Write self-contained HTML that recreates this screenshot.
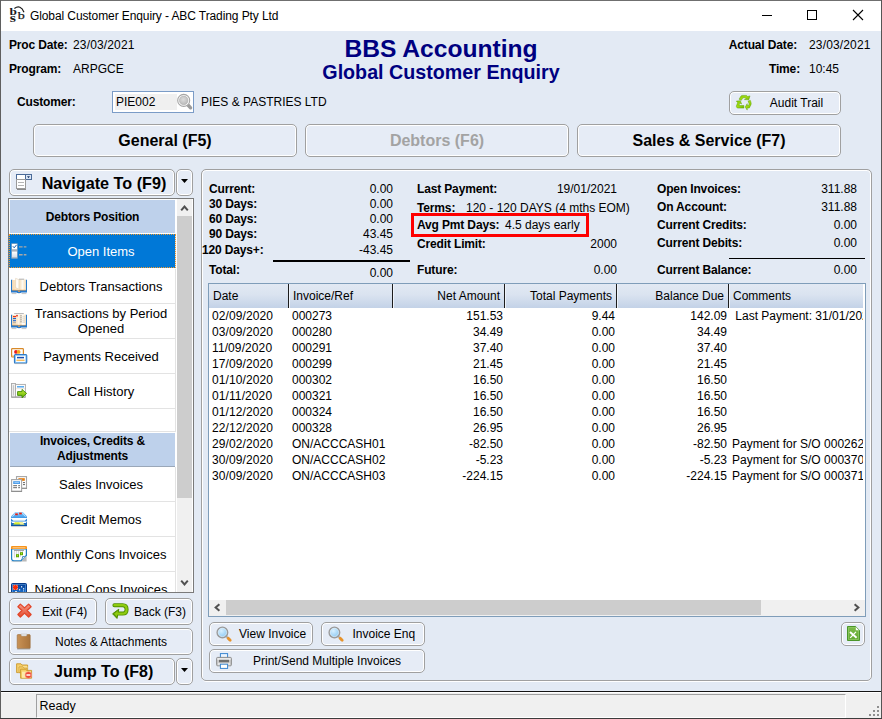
<!DOCTYPE html>
<html><head><meta charset="utf-8"><title>Global Customer Enquiry - ABC Trading Pty Ltd</title>
<style>
html,body{margin:0;padding:0;}
body{width:882px;height:719px;overflow:hidden;position:relative;background:#e3eaf4;font-family:"Liberation Sans",sans-serif;font-size:12px;color:#000;}
.t{position:absolute;white-space:nowrap;}
.a{position:absolute;}
.btn{position:absolute;border:1px solid #a0a0a0;border-radius:5px;box-shadow:inset 0 0 0 1px #fff;background:#e6ecf6;box-sizing:content-box;}
.btn .lbl{position:absolute;left:0;right:0;text-align:center;white-space:nowrap;}
svg{position:absolute;overflow:visible;}
.row{position:absolute;left:0;width:166px;height:34px;border-bottom:1px solid #e3e3e3;border-right:1px solid #e3e3e3;background:#fff;}
.row .lbl{position:absolute;left:18px;right:0;text-align:center;font-size:13px;line-height:21px;}
.hdr{position:absolute;left:1px;width:165px;background:#bed1eb;font-weight:bold;font-size:12px;letter-spacing:-0.15px;text-align:center;}
.gh{position:absolute;top:0;height:24px;line-height:24px;font-size:12px;white-space:nowrap;}
.gr{position:absolute;font-size:12px;line-height:16px;white-space:nowrap;}
</style></head><body>

<div class="a" style="left:0;top:0;width:882px;height:31px;background:#fff;"></div>
<div class="a" style="left:0;top:0;width:882px;height:1px;background:#6f6f6f;"></div>
<div class="a" style="left:0;top:0;width:1px;height:719px;background:#5f5f5f;"></div>
<div class="a" style="left:881px;top:0;width:1px;height:719px;background:#555;"></div>
<div class="a" style="left:0;top:718px;width:882px;height:1px;background:#3c3c3c;"></div>
<svg style="left:0px;top:0px" width="30" height="30" viewBox="0 0 30 30">
<text x="9.6" y="14.7" font-family="Liberation Serif,serif" font-size="10.5" font-weight="bold" fill="#1a1a1a" textLength="7.4" lengthAdjust="spacingAndGlyphs">b</text>
<text x="17.8" y="18.7" font-family="Liberation Serif,serif" font-size="11" fill="#1a1a1a" stroke="#1a1a1a" stroke-width="0.25" textLength="7" lengthAdjust="spacingAndGlyphs">b</text>
<text x="9.8" y="21.7" font-family="Liberation Serif,serif" font-size="11.5" font-weight="bold" fill="#1a1a1a" textLength="6.2" lengthAdjust="spacingAndGlyphs">s</text>
<path d="M14.4 8.4 Q20.6 4.2 24 12.2" fill="none" stroke="#1a1a1a" stroke-width="1.2"/>
</svg>
<div class="t" style="top:8px;line-height:16px;font-size:12px;color:#000;left:30px;letter-spacing:-0.1px;">Global Customer Enquiry - ABC Trading Pty Ltd</div>
<svg style="left:755px;top:5px" width="120" height="22" viewBox="0 0 120 22">
<path d="M7 10.5 H17" stroke="#000" stroke-width="1" fill="none"/>
<rect x="52.5" y="5.5" width="9" height="9" stroke="#000" stroke-width="1" fill="none"/>
<path d="M98 5 L108 15 M108 5 L98 15" stroke="#000" stroke-width="1.1" fill="none"/>
</svg>
<div class="t" style="top:37px;line-height:16px;font-size:12px;color:#000;font-weight:bold;letter-spacing:-0.15px;left:9px;">Proc Date:</div>
<div class="t" style="top:37px;line-height:16px;font-size:12px;color:#000;left:73px;letter-spacing:0.15px;">23/03/2021</div>
<div class="t" style="top:61px;line-height:16px;font-size:12px;color:#000;font-weight:bold;letter-spacing:-0.15px;left:9px;">Program:</div>
<div class="t" style="top:61px;line-height:16px;font-size:12px;color:#000;left:73px;">ARPGCE</div>
<div class="t" style="top:33px;line-height:31px;font-size:24.6px;color:#000080;font-weight:bold;left:241px;width:400px;text-align:center;">BBS Accounting</div>
<div class="t" style="top:60px;line-height:25px;font-size:19.7px;color:#000080;font-weight:bold;left:241px;width:400px;text-align:center;">Global Customer Enquiry</div>
<div class="t" style="top:37px;line-height:16px;font-size:12px;color:#000;font-weight:bold;letter-spacing:-0.15px;right:85px;">Actual Date:</div>
<div class="t" style="top:37px;line-height:16px;font-size:12px;color:#000;left:809px;letter-spacing:0.15px;">23/03/2021</div>
<div class="t" style="top:61px;line-height:16px;font-size:12px;color:#000;font-weight:bold;letter-spacing:-0.15px;right:82px;">Time:</div>
<div class="t" style="top:61px;line-height:16px;font-size:12px;color:#000;left:809px;">10:45</div>
<div class="t" style="top:94px;line-height:16px;font-size:12px;color:#000;font-weight:bold;letter-spacing:-0.15px;left:17px;">Customer:</div>
<div class="a" style="left:112px;top:91px;width:80px;height:20px;border:1px solid #7b9cc7;background:#fff;"></div>
<div class="a" style="left:115px;top:94px;width:62px;height:16px;background:#f0f0f0;"></div>
<div class="t" style="top:94px;line-height:16px;font-size:12px;color:#000;left:116px;">PIE002</div>
<svg style="left:176px;top:92px" width="18" height="20" viewBox="0 0 18 20">
<defs><radialGradient id="gS" cx="0.45" cy="0.4" r="0.7"><stop offset="0" stop-color="#dcdcdc"/><stop offset="1" stop-color="#b4b4b4"/></radialGradient></defs>
<path d="M12 13 L14.6 15.8" stroke="#9c9c9c" stroke-width="3.4" stroke-linecap="round"/>
<circle cx="7.7" cy="8.4" r="6" fill="#fdfdfd" stroke="#a6a6a6" stroke-width="1.1"/>
<circle cx="7.7" cy="8.4" r="4.3" fill="url(#gS)" stroke="#b0b0b0" stroke-width="0.6"/>
</svg>
<div class="t" style="top:94px;line-height:16px;font-size:12px;color:#000;left:201px;">PIES &amp; PASTRIES LTD</div>
<div class="btn" style="left:729px;top:91px;width:110px;height:22px;"><div class="lbl" style="left:23px;top:3px;line-height:16px;font-size:12px;">Audit Trail</div></div>
<svg style="left:736px;top:95px" width="16" height="16" viewBox="0 0 16 16">
<defs><linearGradient id="gR" x1="0" x2="1" y1="0" y2="1"><stop offset="0" stop-color="#86cc08"/><stop offset="0.5" stop-color="#a4dc10"/><stop offset="1" stop-color="#6ab400"/></linearGradient></defs>
<g fill="url(#gR)" stroke="#559c00" stroke-width="0.45" stroke-linejoin="round">
<path d="M3 4.2 L5 1 Q5.4 0.4 6.2 0.4 H10.6 L11.4 1.6 L14 0.9 L12.8 4.8 L8.4 4.6 L10 3.7 L9.4 2.8 H6.9 L5.3 5.3 Z"/>
<path d="M12.1 6 L14.4 5.4 L15.1 7.8 Q15.4 9 14.9 9.9 L13.3 13 H11.2 V15.1 L9.2 12 L11.2 8.7 V10.6 H12.3 L13.2 9 Z"/>
<path d="M0.3 6.1 L4.4 5.7 L5.6 9 L3.9 8.1 L2.9 10.5 H7.9 V13.1 H2 Q0.7 13.1 0.4 11.7 Q0.3 10.8 0.8 9.8 L1.7 7.7 Z"/>
</g>
</svg>
<div class="btn" style="left:33px;top:124px;width:262px;height:31px;"><div class="lbl" style="top:6px;line-height:20px;font-size:16px;font-weight:bold;color:#000;">General (F5)</div></div>
<div class="btn" style="left:305px;top:124px;width:262px;height:31px;"><div class="lbl" style="top:6px;line-height:20px;font-size:16px;font-weight:bold;color:#a3a3a3;">Debtors (F6)</div></div>
<div class="btn" style="left:577px;top:124px;width:262px;height:31px;"><div class="lbl" style="top:6px;line-height:20px;font-size:16px;font-weight:bold;color:#000;">Sales &amp; Service (F7)</div></div>
<div class="btn" style="left:9px;top:169px;width:164px;height:25px;"><div class="lbl" style="left:24px;top:3px;line-height:20px;font-size:16.2px;font-weight:bold;">Navigate To (F9)</div></div>
<svg style="left:16px;top:174px" width="16" height="16" viewBox="0 0 16 16">
<rect x="0.5" y="0.5" width="15" height="5" fill="#fff" stroke="#4a6a98"/>
<rect x="9.5" y="0.5" width="6" height="5" fill="#dbe6f5" stroke="#4a6a98"/>
<path d="M11 2.2 h3 l-1.5 2 z" fill="#1f3a68"/>
<rect x="0.5" y="5.5" width="9" height="9" fill="#fff" stroke="#9a9a9a"/>
<path d="M2 8.5 h6 M2 11.5 h6" stroke="#b5b5b5" stroke-width="1"/>
<path d="M1 15.5 h9" stroke="#8a8a8a" stroke-width="1"/>
</svg>
<div class="btn" style="left:176px;top:169px;width:15px;height:25px;"><svg style="left:4px;top:9px" width="8" height="5" viewBox="0 0 8 5"><path d="M0 0 h7 l-3.5 4 z" fill="#000"/></svg></div>
<div class="a" style="left:8px;top:198px;width:184px;height:393px;border:1px solid #7a7a7a;background:#fff;"></div>
<div class="a" id="list" style="left:9px;top:199px;width:167px;height:393px;overflow:hidden;">
<div class="hdr" style="top:1px;height:33px;line-height:34px;">Debtors Position</div>
<div class="row" style="top:35px;height:34px;border-bottom:none;background:#0078d7;color:#fff;outline:1px dotted #f39a2e;outline-offset:-1px;"><svg style="left:2px;top:9px" width="16" height="16" viewBox="0 0 16 16">
<defs><linearGradient id="gC" x1="0" x2="0" y1="0" y2="1"><stop offset="0" stop-color="#ffffff"/><stop offset="1" stop-color="#d5dde8"/></linearGradient></defs>
<rect x="0.4" y="0.4" width="6.2" height="15.2" fill="#a9b1bd"/>
<rect x="1" y="1" width="5" height="5.2" fill="#fff"/>
<rect x="1" y="8.6" width="5" height="5.6" fill="url(#gC)"/>
<path d="M1.8 3.2 L3.2 4.8 L5.6 1.8" fill="none" stroke="#1f5fae" stroke-width="1"/>
<path d="M8 3.9 H11.6 M12.8 3.9 H15.4 M8 11.7 H11.6 M12.8 11.7 H15.4" stroke="#a8a8a8" stroke-width="1.4"/>
</svg><div class="lbl" style="top:7px;">Open Items</div></div>
<div class="row" style="top:70px;height:34px;"><svg style="left:2px;top:9px" width="16" height="16" viewBox="0 0 16 16"><defs>
<linearGradient id="pgL" x1="0" x2="1" y1="0" y2="0"><stop offset="0" stop-color="#f7d9ae"/><stop offset="1" stop-color="#fdf0de"/></linearGradient>
<linearGradient id="pgR" x1="0" x2="1" y1="0" y2="0"><stop offset="0" stop-color="#f3dcb8"/><stop offset="0.5" stop-color="#fffaf0"/><stop offset="1" stop-color="#fbe0b8"/></linearGradient>
</defs>
<path d="M0 1.8 H1.3 V12 H14.7 V1.8 H16 V14.5 H10.4 Q9.8 15.3 8 15.3 Q6.2 15.3 5.6 14.5 H0 Z" fill="#2679cc"/>
<rect x="1.2" y="2" width="6.6" height="10" fill="url(#pgL)"/>
<rect x="8.2" y="1.6" width="6.6" height="10.4" fill="url(#pgR)"/>
<path d="M1.2 12.2 H14.8" stroke="#f3a54a" stroke-width="0.7"/>
<rect x="7.2" y="12.7" width="1.6" height="1.2" fill="#f3a54a"/>
<path d="M0.6 15.6 H5.4 M10.6 15.6 H15.4" stroke="#b4b4b4" stroke-width="0.8"/>

<path d="M8 1.2 H13.2" stroke="#9a9a9a" stroke-width="0.8"/>
<path d="M4.6 0.4 L7.9 1.6 V11.2 L4.6 9.6 Z" fill="#fffdf8" stroke="#dcc6a4" stroke-width="0.5"/>
</svg><div class="lbl" style="top:7px;">Debtors Transactions</div></div>
<div class="row" style="top:105px;height:34px;"><svg style="left:2px;top:9px" width="16" height="16" viewBox="0 0 16 16"><defs>
<linearGradient id="pgL2" x1="0" x2="1" y1="0" y2="0"><stop offset="0" stop-color="#f7d9ae"/><stop offset="1" stop-color="#fdf0de"/></linearGradient>
<linearGradient id="pgR2" x1="0" x2="1" y1="0" y2="0"><stop offset="0" stop-color="#f3dcb8"/><stop offset="0.5" stop-color="#fffaf0"/><stop offset="1" stop-color="#fbe0b8"/></linearGradient>
</defs>
<path d="M0 1.8 H1.3 V12 H14.7 V1.8 H16 V14.5 H10.4 Q9.8 15.3 8 15.3 Q6.2 15.3 5.6 14.5 H0 Z" fill="#2679cc"/>
<rect x="1.2" y="2" width="6.6" height="10" fill="url(#pgL2)"/>
<rect x="8.2" y="1.6" width="6.6" height="10.4" fill="url(#pgR2)"/>
<path d="M1.2 12.2 H14.8" stroke="#f3a54a" stroke-width="0.7"/>
<rect x="7.2" y="12.7" width="1.6" height="1.2" fill="#f3a54a"/>
<path d="M0.6 15.6 H5.4 M10.6 15.6 H15.4" stroke="#b4b4b4" stroke-width="0.8"/>

<path d="M3.2 0.6 H12.8" stroke="#a0a0a0" stroke-width="0.8"/>
<rect x="7.6" y="1.4" width="0.8" height="10.6" fill="#fff7e8"/>
<path d="M2 3.6 H5" stroke="#e8301a" stroke-width="1.2"/><circle cx="6" cy="2.7" r="0.9" fill="#e8301a"/>
<path d="M2 5.6 H5" stroke="#1a62d0" stroke-width="1.1"/>
<path d="M2 7.7 H5" stroke="#1a62d0" stroke-width="1.1"/>
<path d="M2 9.7 H5" stroke="#9a9a9a" stroke-width="0.8"/>
<path d="M9 2.8 H11 M9 4.8 H11 M9 6.8 H11 M9 8.8 H11" stroke="#9a9a9a" stroke-width="0.8"/>
<path d="M11.4 3.8 H14 M11.4 5.8 H14 M11.4 7.8 H14 M11.4 9.8 H14" stroke="#cfcfcf" stroke-width="0.8"/>
<rect x="11" y="10.2" width="3" height="1.4" fill="#fff"/>
</svg><div class="lbl" style="top:2px;line-height:15px;">Transactions by Period<br>Opened</div></div>
<div class="row" style="top:140px;height:34px;"><svg style="left:2px;top:9px" width="16" height="16" viewBox="0 0 16 16">
<rect x="0.6" y="0.6" width="11.8" height="8.4" rx="0.8" fill="#fff" stroke="#d88a2a" stroke-width="1.2"/>
<path d="M1 8.2 H12" stroke="#f5b24a" stroke-width="1.2"/>
<circle cx="5" cy="3.9" r="1.9" fill="#e81a1a"/><circle cx="7.6" cy="3.9" r="1.9" fill="#f7a81a"/>
<rect x="3.6" y="6.6" width="12" height="8.4" rx="0.8" fill="#fff" stroke="#2f78c4" stroke-width="1.4"/>
<rect x="4.3" y="7.3" width="10.6" height="7" fill="none" stroke="#7cc0f5" stroke-width="0.7"/>
<path d="M6 9.6 H13" stroke="#1a4fb0" stroke-width="1.5"/>
<path d="M5.4 12.2 H13.6" stroke="#f5a21a" stroke-width="1"/>
<path d="M4 15.6 H15.6" stroke="#b9b9b9" stroke-width="0.7"/>
</svg><div class="lbl" style="top:7px;">Payments Received</div></div>
<div class="row" style="top:175px;height:34px;"><svg style="left:2px;top:9px" width="16" height="16" viewBox="0 0 16 16">
<defs><linearGradient id="gA" x1="0" x2="0" y1="0" y2="1"><stop offset="0" stop-color="#c8f03a"/><stop offset="1" stop-color="#5fae00"/></linearGradient></defs>
<rect x="4.4" y="1.4" width="10" height="12.4" fill="#fdfdfd" stroke="#a8a8a8" stroke-width="0.9"/>
<rect x="0.5" y="0.5" width="4" height="13.4" fill="#f1f1f1" stroke="#a8a8a8" stroke-width="0.9"/>
<path d="M2.4 2.2 V12.5" stroke="#b5b5b5" stroke-width="0.8"/>
<path d="M6 3.8 H13" stroke="#4aa3ee" stroke-width="1.4"/>
<path d="M5.2 5.6 H14" stroke="#e6d6c6" stroke-width="0.6"/>
<path d="M0.3 14.4 H14.6" stroke="#9c9c9c" stroke-width="0.9"/>
<path d="M6.6 8.6 H11 V6.4 L15.6 10.4 L11 14.8 V12.4 H6.6 Z" fill="url(#gA)" stroke="#3f8a00" stroke-width="0.9" stroke-linejoin="round"/>
</svg><div class="lbl" style="top:7px;">Call History</div></div>
<div class="row" style="top:210px;height:22px;"><div class="lbl" style="top:7px;"></div></div>
<div class="hdr" style="top:234px;height:33px;line-height:15px;border-bottom:1px solid #9aa7b8;"><div style="padding-top:1px">Invoices, Credits &amp;<br>Adjustments</div></div>
<div class="row" style="top:268px;height:34px;"><svg style="left:2px;top:9px" width="16" height="16" viewBox="0 0 16 16">
<rect x="5.5" y="0.6" width="10" height="11.6" fill="#fff" stroke="#a6a6a6" stroke-width="1.1"/>
<path d="M5.2 12.4 H16" stroke="#8f8f8f" stroke-width="1"/>
<rect x="7.4" y="2.2" width="6.4" height="2.6" fill="#e87d0c"/>
<path d="M12 6.6 H14 M12 8.6 H14" stroke="#555" stroke-width="0.9"/>
<rect x="0.6" y="3.6" width="10" height="11.6" fill="#fff" stroke="#a6a6a6" stroke-width="1.1"/>
<path d="M0.2 15.5 H11" stroke="#8f8f8f" stroke-width="1"/>
<rect x="2.2" y="5.2" width="6.8" height="2.8" fill="#4a9be8"/>
<path d="M3.4 6.6 H8" stroke="#bfe0ff" stroke-width="0.7"/>
<path d="M2.2 9.7 H6 M7.2 9.7 H9 M2.2 11.7 H6 M7.2 11.7 H9" stroke="#555" stroke-width="0.9"/>
</svg><div class="lbl" style="top:7px;">Sales Invoices</div></div>
<div class="row" style="top:303px;height:34px;"><svg style="left:2px;top:9px" width="16" height="16" viewBox="0 0 16 16">
<defs><linearGradient id="gT" x1="0" x2="0" y1="0" y2="1"><stop offset="0" stop-color="#8fd0ff"/><stop offset="1" stop-color="#3c97e6"/></linearGradient></defs>
<path d="M4.2 1 H11.8 L16 5.6 V7 H0 V5.6 Z" fill="url(#gT)"/>
<path d="M1.4 5.8 L4.6 2 H11.4 L14.6 5.8" fill="none" stroke="#d9efff" stroke-width="0.7"/>
<rect x="4.2" y="2.4" width="2.6" height="1.8" fill="#ee1c0c"/><rect x="8.2" y="1.6" width="2.6" height="1.8" fill="#ee1c0c"/>
<path d="M0 7.4 L2 9.4 H14 L16 7.4 V10.4 H0 Z" fill="#2f86d9"/>
<path d="M2.2 9.2 H13.8" stroke="#e9f5ff" stroke-width="0.8"/>
<path d="M0 10.8 L1.4 12 H14.6 L16 10.8 V15 H0 Z" fill="#1d6fc4"/>
<path d="M4 11.2 H11.2 L13.6 13.6 H2 Z" fill="#d8e82a"/><path d="M8 11.2 H11.2 L13.6 13.6 H9.4 Z" fill="#f6f0a0"/>
<path d="M0 14.6 H16" stroke="#0f56a6" stroke-width="1.2"/>
<path d="M0.4 15.6 H15.6" stroke="#c4c4c4" stroke-width="0.6"/>
</svg><div class="lbl" style="top:7px;">Credit Memos</div></div>
<div class="row" style="top:338px;height:34px;"><svg style="left:2px;top:9px" width="16" height="16" viewBox="0 0 16 16">
<path d="M0.6 3 V12.6 Q0.6 14.8 2.8 14.8 H10 L15.4 9.6 V3 Z" fill="#fff" stroke="#1f7fc4" stroke-width="1.2"/>
<path d="M10 15.4 L15.6 10 V15.4 Z" fill="#b9b9b9"/>
<path d="M10.4 14.6 Q11.6 12 11.6 10.6 Q13.4 10.8 15 9.8" fill="#e9f1f8" stroke="#2d7fbe" stroke-width="0.9"/>
<path d="M0 0.9 Q0 0 1 0 H15 Q16 0 16 0.9 V3 H0 Z" fill="#f7941d"/>
<path d="M1.6 1.8 H14.4" stroke="#ffe2b6" stroke-width="0.8"/>
<path d="M3 4.4 H13 M3.4 4.4 V11.6 M5.4 4.4 V11.6 M7.4 4.4 V11.6 M9.4 4.4 V11 M11.4 4.4 V9" stroke="#b7b7c4" stroke-width="0.6"/>
<path d="M3 4.4 H13" stroke="#9a9a9a" stroke-width="0.9"/>
<rect x="5" y="8.2" width="3" height="3" fill="#5fa800"/><rect x="9" y="6.2" width="3" height="3" fill="#5fa800"/>
<rect x="6" y="9.2" width="1" height="1" fill="#c6ee3a"/><rect x="10" y="7.2" width="1" height="1" fill="#c6ee3a"/>
<path d="M0.4 15.6 H10" stroke="#bdbdbd" stroke-width="0.6"/>
</svg><div class="lbl" style="top:7px;">Monthly Cons Invoices</div></div>
<div class="row" style="top:373px;height:34px;"><svg style="left:2px;top:9px" width="16" height="16" viewBox="0 0 16 16">
<defs><linearGradient id="gF" x1="0" x2="0" y1="0" y2="1"><stop offset="0" stop-color="#06398c"/><stop offset="1" stop-color="#1f7fe0"/></linearGradient></defs>
<rect x="0.5" y="2.5" width="15" height="12" rx="1" fill="url(#gF)" stroke="#083a8a" stroke-width="1"/>
<rect x="1.4" y="3.4" width="13.2" height="10.2" fill="none" stroke="#6fb3f2" stroke-width="0.5"/>
<rect x="1.8" y="3.8" width="5.2" height="5.2" fill="#9fd4ff"/>
<path d="M4.4 3.8 V9 M1.8 6.4 H7 M2.2 4.2 L6.6 8.6 M6.6 4.2 L2.2 8.6" stroke="#ff2a00" stroke-width="1.3"/>
<rect x="3.2" y="5.2" width="2.4" height="2.4" fill="#ff2a00"/>
<rect x="10" y="5.2" width="1.2" height="1.2" fill="#fff"/><rect x="12" y="7.2" width="1.2" height="1.2" fill="#fff"/><rect x="8" y="8.2" width="1.2" height="1.2" fill="#fff"/><rect x="12" y="9.4" width="1" height="1" fill="#cfe6ff"/>
<rect x="4" y="10.2" width="2" height="1.4" fill="#fff"/>
</svg><div class="lbl" style="top:7px;">National Cons Invoices</div></div>
</div>
<div class="a" style="left:177px;top:199px;width:15px;height:393px;background:#f0f0f0;"></div>
<div class="a" style="left:177px;top:216px;width:15px;height:282px;background:#cdcdcd;"></div>
<svg style="left:180px;top:204px" width="9" height="8" viewBox="0 0 9 8"><path d="M1.2 6.4 L4.5 2.6 L7.8 6.4" fill="none" stroke="#505050" stroke-width="2"/></svg>
<svg style="left:180px;top:579px" width="9" height="8" viewBox="0 0 9 8"><path d="M1.2 1.6 L4.5 5.4 L7.8 1.6" fill="none" stroke="#505050" stroke-width="2"/></svg>
<div class="btn" style="left:9px;top:598px;width:86px;height:25px;"></div>
<svg style="left:16.5px;top:603px" width="15" height="15" viewBox="0 0 16 16">
<defs><linearGradient id="gX" x1="0" x2="0" y1="0" y2="1"><stop offset="0" stop-color="#f59a88"/><stop offset="1" stop-color="#e44a2e"/></linearGradient></defs>
<path d="M3.6 1.2 L8 5.2 L12.4 1.2 L15 4 L10.8 8 L15 12.2 L12.4 15 L8 10.8 L3.6 15 L1 12.2 L5.2 8 L1 4 Z" fill="url(#gX)" stroke="#e2462a" stroke-width="1.4" stroke-linejoin="round"/>
</svg>
<div class="t" style="top:604px;line-height:16px;font-size:12px;color:#000;left:42px;">Exit (F4)</div>
<div class="btn" style="left:105px;top:598px;width:86px;height:25px;"></div>
<svg style="left:112px;top:603px" width="16" height="16" viewBox="0 0 16 16">
<path d="M2.4 2.2 H10.6 Q14.6 2.2 14.6 6.4 Q14.6 10.6 10.6 10.6 H5.6" fill="none" stroke="#4f8f00" stroke-width="4" stroke-linecap="round"/>
<path d="M6.8 6.2 L0.6 10.8 L5 15.4 Z" fill="#4f8f00" stroke="#4f8f00" stroke-width="1" stroke-linejoin="round"/>
<path d="M2.4 2.2 H10.6 Q14.6 2.2 14.6 6.4 Q14.6 10.6 10.6 10.6 H5.6" fill="none" stroke="#8ecb10" stroke-width="2.2" stroke-linecap="round"/>
<path d="M6 7.8 L2 10.8 L4.8 13.8 Z" fill="#8ecb10"/>
</svg>
<div class="t" style="top:604px;line-height:16px;font-size:12px;color:#000;left:134px;">Back (F3)</div>
<div class="btn" style="left:9px;top:628px;width:182px;height:25px;"></div>
<svg style="left:16px;top:632.6px" width="16" height="16" viewBox="0 0 16 16">
<defs><linearGradient id="gN" x1="0" x2="1" y1="0" y2="0"><stop offset="0" stop-color="#c99356"/><stop offset="0.5" stop-color="#b98248"/><stop offset="1" stop-color="#a9743c"/></linearGradient></defs>
<rect x="1.2" y="1.6" width="13" height="14" rx="0.8" fill="url(#gN)" stroke="#9a6a36" stroke-width="0.6"/>
<path d="M5 1 H11 L10.4 3 H5.6 Z" fill="#e9e9e9" stroke="#b9b9b9" stroke-width="0.5"/>
<path d="M1 16 H14.4" stroke="#8a8a8a" stroke-width="0.6"/>
</svg>
<div class="t" style="top:634px;line-height:16px;font-size:12px;color:#000;left:55px;">Notes &amp; Attachments</div>
<div class="btn" style="left:9px;top:658px;width:164px;height:25px;"></div>
<svg style="left:16px;top:663px" width="16" height="16" viewBox="0 0 16 16">
<path d="M0.6 0.8 H5 L6 2 H11.6 V9.6 H0.6 Z" fill="#f6cf68" stroke="#c9972c" stroke-width="0.9"/>
<path d="M2 3.4 H11.4 V9.4 H2 Z" fill="#fde9a8"/>
<path d="M2.8 3.8 H7 L8 5 H11 V9.6 H2.8 Z" fill="#f6cf68" stroke="#c9972c" stroke-width="0.7"/>
<path d="M4.6 6.2 H9.6 L10.6 7.4 H15.6 V15.2 H4.6 Z" fill="#f6cf68" stroke="#c9972c" stroke-width="0.9"/>
<path d="M6 8.6 H15 V14.8 H6 Z" fill="#fde9a8"/>
<circle cx="12.4" cy="12" r="3.3" fill="#ee4a36" stroke="#f7a08e" stroke-width="0.6"/>
<path d="M10.4 12 H14.4" stroke="#fff" stroke-width="1.5"/>
</svg>
<div class="t" style="top:662px;line-height:20px;font-size:16px;color:#000;font-weight:bold;left:54px;">Jump To (F8)</div>
<div class="btn" style="left:176px;top:658px;width:15px;height:25px;"><svg style="left:4px;top:9px" width="8" height="5" viewBox="0 0 8 5"><path d="M0 0 h7 l-3.5 4 z" fill="#000"/></svg></div>
<div class="a" style="left:202px;top:170px;width:667px;height:510px;border:1px solid #fff;border-radius:4px;"></div>
<div class="a" style="left:201px;top:169px;width:669px;height:510px;border:1px solid #a0a0a0;border-radius:5px;"></div>
<div class="t" style="top:181px;line-height:16px;font-size:12px;color:#000;font-weight:bold;letter-spacing:-0.15px;left:209px;">Current:</div>
<div class="t" style="top:181px;line-height:16px;font-size:12px;color:#000;right:489px;">0.00</div>
<div class="t" style="top:196px;line-height:16px;font-size:12px;color:#000;font-weight:bold;letter-spacing:-0.15px;left:209px;">30 Days:</div>
<div class="t" style="top:196px;line-height:16px;font-size:12px;color:#000;right:489px;">0.00</div>
<div class="t" style="top:211px;line-height:16px;font-size:12px;color:#000;font-weight:bold;letter-spacing:-0.15px;left:209px;">60 Days:</div>
<div class="t" style="top:211px;line-height:16px;font-size:12px;color:#000;right:489px;">0.00</div>
<div class="t" style="top:226px;line-height:16px;font-size:12px;color:#000;font-weight:bold;letter-spacing:-0.15px;left:209px;">90 Days:</div>
<div class="t" style="top:226px;line-height:16px;font-size:12px;color:#000;right:489px;">43.45</div>
<div class="t" style="top:262px;line-height:16px;font-size:12px;color:#000;font-weight:bold;letter-spacing:-0.15px;left:209px;">Total:</div>
<div class="t" style="top:265px;line-height:16px;font-size:12px;color:#000;right:489px;">0.00</div>
<div class="t" style="top:242px;line-height:16px;font-size:12px;color:#000;font-weight:bold;letter-spacing:-0.15px;left:202px;">120 Days+:</div>
<div class="t" style="top:242px;line-height:16px;font-size:12px;color:#000;right:489px;">-43.45</div>
<div class="a" style="left:273px;top:260px;width:137px;height:2px;background:#000;"></div>
<div class="t" style="top:181px;line-height:16px;font-size:12px;color:#000;font-weight:bold;letter-spacing:-0.15px;left:417px;">Last Payment:</div>
<div class="t" style="top:181px;line-height:16px;font-size:12px;color:#000;right:265px;">19/01/2021</div>
<div class="t" style="top:236px;line-height:16px;font-size:12px;color:#000;font-weight:bold;letter-spacing:-0.15px;left:417px;">Credit Limit:</div>
<div class="t" style="top:236px;line-height:16px;font-size:12px;color:#000;right:265px;">2000</div>
<div class="t" style="top:262px;line-height:16px;font-size:12px;color:#000;font-weight:bold;letter-spacing:-0.15px;left:417px;">Future:</div>
<div class="t" style="top:262px;line-height:16px;font-size:12px;color:#000;right:265px;">0.00</div>
<div class="t" style="top:200px;line-height:16px;font-size:12px;color:#000;font-weight:bold;letter-spacing:-0.15px;left:417px;">Terms:</div>
<div class="t" style="top:200px;line-height:16px;font-size:12px;color:#000;left:466px;">120 - 120 DAYS (4 mths EOM)</div>
<div class="a" style="left:411px;top:213px;width:172px;height:18px;border:3px solid #fe0000;background:#e3eaf4;"></div>
<div class="t" style="top:217px;line-height:16px;font-size:12px;color:#000;font-weight:bold;letter-spacing:-0.15px;left:417px;">Avg Pmt Days:</div>
<div class="t" style="top:217px;line-height:16px;font-size:12px;color:#000;left:505px;">4.5 days early</div>
<div class="t" style="top:181px;line-height:16px;font-size:12px;color:#000;font-weight:bold;letter-spacing:-0.15px;left:657px;">Open Invoices:</div>
<div class="t" style="top:181px;line-height:16px;font-size:12px;color:#000;right:25px;">311.88</div>
<div class="t" style="top:199px;line-height:16px;font-size:12px;color:#000;font-weight:bold;letter-spacing:-0.15px;left:657px;">On Account:</div>
<div class="t" style="top:199px;line-height:16px;font-size:12px;color:#000;right:25px;">311.88</div>
<div class="t" style="top:217px;line-height:16px;font-size:12px;color:#000;font-weight:bold;letter-spacing:-0.15px;left:657px;">Current Credits:</div>
<div class="t" style="top:217px;line-height:16px;font-size:12px;color:#000;right:25px;">0.00</div>
<div class="t" style="top:235px;line-height:16px;font-size:12px;color:#000;font-weight:bold;letter-spacing:-0.15px;left:657px;">Current Debits:</div>
<div class="t" style="top:235px;line-height:16px;font-size:12px;color:#000;right:25px;">0.00</div>
<div class="t" style="top:262px;line-height:16px;font-size:12px;color:#000;font-weight:bold;letter-spacing:-0.15px;left:657px;">Current Balance:</div>
<div class="t" style="top:262px;line-height:16px;font-size:12px;color:#000;right:25px;">0.00</div>
<div class="a" style="left:729px;top:258px;width:136px;height:1px;background:#000;"></div>
<div class="a" style="left:208px;top:283px;width:656px;height:332px;border:1px solid #7f9db9;background:#fff;"></div>
<div class="a" style="left:209px;top:284px;width:654px;height:24px;background:linear-gradient(#e2e9f3,#dae3f0 45%,#c3d2e7);overflow:hidden;">
<div class="gh" style="left:4px;">Date</div>
<div class="a" style="left:79px;top:0;width:1px;height:24px;background:#1c1c1c;"></div><div class="a" style="left:80px;top:0;width:1px;height:24px;background:#eef3fa;"></div>
<div class="gh" style="left:84px;">Invoice/Ref</div>
<div class="a" style="left:183px;top:0;width:1px;height:24px;background:#1c1c1c;"></div><div class="a" style="left:184px;top:0;width:1px;height:24px;background:#eef3fa;"></div>
<div class="gh" style="left:0;width:291px;text-align:right;">Net Amount</div>
<div class="a" style="left:295px;top:0;width:1px;height:24px;background:#1c1c1c;"></div><div class="a" style="left:296px;top:0;width:1px;height:24px;background:#eef3fa;"></div>
<div class="gh" style="left:0;width:403px;text-align:right;">Total Payments</div>
<div class="a" style="left:407px;top:0;width:1px;height:24px;background:#1c1c1c;"></div><div class="a" style="left:408px;top:0;width:1px;height:24px;background:#eef3fa;"></div>
<div class="gh" style="left:0;width:515px;text-align:right;">Balance Due</div>
<div class="a" style="left:519px;top:0;width:1px;height:24px;background:#1c1c1c;"></div><div class="a" style="left:520px;top:0;width:1px;height:24px;background:#eef3fa;"></div>
<div class="gh" style="left:524px;">Comments</div>
</div>
<div class="a" style="left:209px;top:308px;width:654px;height:292px;overflow:hidden;">
<div class="gr" style="left:3px;top:0px;letter-spacing:0.1px;">02/09/2020</div>
<div class="gr" style="left:83px;top:0px;">000273</div>
<div class="gr" style="left:0;width:294px;text-align:right;top:0px;">151.53</div>
<div class="gr" style="left:0;width:406px;text-align:right;top:0px;">9.44</div>
<div class="gr" style="left:0;width:518px;text-align:right;top:0px;">142.09</div>
<div class="gr" style="left:523px;top:0px;white-space:pre;"> Last Payment: 31/01/2021</div>
<div class="gr" style="left:3px;top:16px;letter-spacing:0.1px;">03/09/2020</div>
<div class="gr" style="left:83px;top:16px;">000280</div>
<div class="gr" style="left:0;width:294px;text-align:right;top:16px;">34.49</div>
<div class="gr" style="left:0;width:406px;text-align:right;top:16px;">0.00</div>
<div class="gr" style="left:0;width:518px;text-align:right;top:16px;">34.49</div>
<div class="gr" style="left:3px;top:32px;letter-spacing:0.1px;">11/09/2020</div>
<div class="gr" style="left:83px;top:32px;">000291</div>
<div class="gr" style="left:0;width:294px;text-align:right;top:32px;">37.40</div>
<div class="gr" style="left:0;width:406px;text-align:right;top:32px;">0.00</div>
<div class="gr" style="left:0;width:518px;text-align:right;top:32px;">37.40</div>
<div class="gr" style="left:3px;top:48px;letter-spacing:0.1px;">17/09/2020</div>
<div class="gr" style="left:83px;top:48px;">000299</div>
<div class="gr" style="left:0;width:294px;text-align:right;top:48px;">21.45</div>
<div class="gr" style="left:0;width:406px;text-align:right;top:48px;">0.00</div>
<div class="gr" style="left:0;width:518px;text-align:right;top:48px;">21.45</div>
<div class="gr" style="left:3px;top:64px;letter-spacing:0.1px;">01/10/2020</div>
<div class="gr" style="left:83px;top:64px;">000302</div>
<div class="gr" style="left:0;width:294px;text-align:right;top:64px;">16.50</div>
<div class="gr" style="left:0;width:406px;text-align:right;top:64px;">0.00</div>
<div class="gr" style="left:0;width:518px;text-align:right;top:64px;">16.50</div>
<div class="gr" style="left:3px;top:80px;letter-spacing:0.1px;">01/11/2020</div>
<div class="gr" style="left:83px;top:80px;">000321</div>
<div class="gr" style="left:0;width:294px;text-align:right;top:80px;">16.50</div>
<div class="gr" style="left:0;width:406px;text-align:right;top:80px;">0.00</div>
<div class="gr" style="left:0;width:518px;text-align:right;top:80px;">16.50</div>
<div class="gr" style="left:3px;top:96px;letter-spacing:0.1px;">01/12/2020</div>
<div class="gr" style="left:83px;top:96px;">000324</div>
<div class="gr" style="left:0;width:294px;text-align:right;top:96px;">16.50</div>
<div class="gr" style="left:0;width:406px;text-align:right;top:96px;">0.00</div>
<div class="gr" style="left:0;width:518px;text-align:right;top:96px;">16.50</div>
<div class="gr" style="left:3px;top:112px;letter-spacing:0.1px;">22/12/2020</div>
<div class="gr" style="left:83px;top:112px;">000328</div>
<div class="gr" style="left:0;width:294px;text-align:right;top:112px;">26.95</div>
<div class="gr" style="left:0;width:406px;text-align:right;top:112px;">0.00</div>
<div class="gr" style="left:0;width:518px;text-align:right;top:112px;">26.95</div>
<div class="gr" style="left:3px;top:128px;letter-spacing:0.1px;">29/02/2020</div>
<div class="gr" style="left:83px;top:128px;">ON/ACCCASH01</div>
<div class="gr" style="left:0;width:294px;text-align:right;top:128px;">-82.50</div>
<div class="gr" style="left:0;width:406px;text-align:right;top:128px;">0.00</div>
<div class="gr" style="left:0;width:518px;text-align:right;top:128px;">-82.50</div>
<div class="gr" style="left:523px;top:128px;white-space:pre;">Payment for S/O 0002625</div>
<div class="gr" style="left:3px;top:144px;letter-spacing:0.1px;">30/09/2020</div>
<div class="gr" style="left:83px;top:144px;">ON/ACCCASH02</div>
<div class="gr" style="left:0;width:294px;text-align:right;top:144px;">-5.23</div>
<div class="gr" style="left:0;width:406px;text-align:right;top:144px;">0.00</div>
<div class="gr" style="left:0;width:518px;text-align:right;top:144px;">-5.23</div>
<div class="gr" style="left:523px;top:144px;white-space:pre;">Payment for S/O 0003701</div>
<div class="gr" style="left:3px;top:160px;letter-spacing:0.1px;">30/09/2020</div>
<div class="gr" style="left:83px;top:160px;">ON/ACCCASH03</div>
<div class="gr" style="left:0;width:294px;text-align:right;top:160px;">-224.15</div>
<div class="gr" style="left:0;width:406px;text-align:right;top:160px;">0.00</div>
<div class="gr" style="left:0;width:518px;text-align:right;top:160px;">-224.15</div>
<div class="gr" style="left:523px;top:160px;white-space:pre;">Payment for S/O 0003712</div>
</div>
<div class="a" style="left:209px;top:600px;width:656px;height:16px;background:#f0f0f0;"></div>
<div class="a" style="left:226px;top:600px;width:535px;height:15px;background:#cdcdcd;"></div>
<svg style="left:213px;top:603px" width="8" height="9" viewBox="0 0 8 9"><path d="M6.4 1.2 L2.6 4.5 L6.4 7.8" fill="none" stroke="#505050" stroke-width="2"/></svg>
<svg style="left:853px;top:603px" width="8" height="9" viewBox="0 0 8 9"><path d="M1.6 1.2 L5.4 4.5 L1.6 7.8" fill="none" stroke="#505050" stroke-width="2"/></svg>
<div class="btn" style="left:209px;top:622px;width:102px;height:22px;"></div>
<svg style="left:216px;top:626px" width="16" height="16" viewBox="0 0 16 16">
<defs><radialGradient id="gM" cx="0.4" cy="0.35" r="0.7"><stop offset="0" stop-color="#d9f0ff"/><stop offset="1" stop-color="#86c6f2"/></radialGradient></defs>
<path d="M10 10 L13.6 13.8" stroke="#b9b9b9" stroke-width="2.4" stroke-linecap="round"/>
<path d="M12.2 12.2 L14.2 14.2" stroke="#e8932a" stroke-width="2.8" stroke-linecap="round"/>
<circle cx="6.4" cy="6.4" r="5.2" fill="url(#gM)" stroke="#9a9a9a" stroke-width="1.6"/>
<circle cx="6.4" cy="6.4" r="4.2" fill="none" stroke="#e9f6ff" stroke-width="0.6"/>
</svg>
<div class="t" style="top:626px;line-height:16px;font-size:12px;color:#000;left:239px;">View Invoice</div>
<div class="btn" style="left:321px;top:622px;width:102px;height:22px;"></div>
<svg style="left:328px;top:626px" width="16" height="16" viewBox="0 0 16 16">
<defs><radialGradient id="gM2" cx="0.4" cy="0.35" r="0.7"><stop offset="0" stop-color="#d9f0ff"/><stop offset="1" stop-color="#86c6f2"/></radialGradient></defs>
<path d="M10 10 L13.6 13.8" stroke="#b9b9b9" stroke-width="2.4" stroke-linecap="round"/>
<path d="M12.2 12.2 L14.2 14.2" stroke="#e8932a" stroke-width="2.8" stroke-linecap="round"/>
<circle cx="6.4" cy="6.4" r="5.2" fill="url(#gM2)" stroke="#9a9a9a" stroke-width="1.6"/>
<circle cx="6.4" cy="6.4" r="4.2" fill="none" stroke="#e9f6ff" stroke-width="0.6"/>
</svg>
<div class="t" style="top:626px;line-height:16px;font-size:12px;color:#000;left:352.5px;">Invoice Enq</div>
<div class="btn" style="left:209px;top:649px;width:214px;height:22px;"></div>
<svg style="left:216px;top:653px" width="16" height="16" viewBox="0 0 16 16">
<rect x="4.4" y="0.6" width="7.2" height="5" fill="#eaf4ff" stroke="#3a86d0" stroke-width="1"/>
<rect x="0.6" y="4.4" width="14.8" height="8.4" rx="1" fill="#c9c9c9" stroke="#8e8e8e" stroke-width="1"/>
<rect x="1.4" y="5.2" width="13.2" height="1.6" fill="#f1f1f1"/>
<rect x="3" y="6.8" width="10" height="2.6" fill="#6f6f6f"/>
<rect x="2" y="9.8" width="12" height="2.4" fill="#e6e6e6"/>
<rect x="4.4" y="11.2" width="7.2" height="4.2" fill="#fff" stroke="#3a86d0" stroke-width="1"/>
</svg>
<div class="t" style="top:653px;line-height:16px;font-size:12px;color:#000;left:253px;">Print/Send Multiple Invoices</div>
<div class="btn" style="left:841px;top:622px;width:22px;height:22px;"></div>
<svg style="left:847px;top:626px" width="13" height="15" viewBox="0 0 13 15">
<defs><linearGradient id="gE" x1="0" x2="0" y1="0" y2="1"><stop offset="0" stop-color="#7dbb4a"/><stop offset="1" stop-color="#62a930"/></linearGradient></defs>
<path d="M0.5 0.5 H8.6 L12.5 4.4 V14.5 H0.5 Z" fill="url(#gE)" stroke="#4b962a" stroke-width="1"/>
<path d="M1.5 1.5 H8.2 L11.5 4.8 V13.5 H1.5 Z" fill="none" stroke="#94cc68" stroke-width="0.7"/>
<path d="M8.8 1 L12 4.2 H8.8 Z" fill="#fff"/>
<path d="M3 6 L9.6 11.8" stroke="#fff" stroke-width="1.9"/><path d="M9 5.8 L3.2 11.8" stroke="#fff" stroke-width="1.2"/>
</svg>
<div class="a" style="left:1px;top:691px;width:880px;height:1px;background:#141414;"></div>
<div class="a" style="left:1px;top:692px;width:880px;height:1px;background:#fff;"></div>
<div class="a" style="left:1px;top:693px;width:880px;height:25px;background:#f0f0f0;"></div>
<div class="a" style="left:36px;top:694px;width:808px;height:22px;border-left:1px solid #a0a0a0;border-top:1px solid #a0a0a0;border-right:1px solid #fff;border-bottom:1px solid #fff;"></div>
<div class="t" style="top:698px;line-height:16px;font-size:12.5px;color:#000;left:39.5px;">Ready</div>
<svg style="left:868px;top:705px" width="12" height="12" viewBox="0 0 12 12">
<g fill="#8f8f8f"><rect x="9" y="1" width="2" height="2"/><rect x="5" y="5" width="2" height="2"/><rect x="9" y="5" width="2" height="2"/><rect x="1" y="9" width="2" height="2"/><rect x="5" y="9" width="2" height="2"/><rect x="9" y="9" width="2" height="2"/></g></svg>
</body></html>
